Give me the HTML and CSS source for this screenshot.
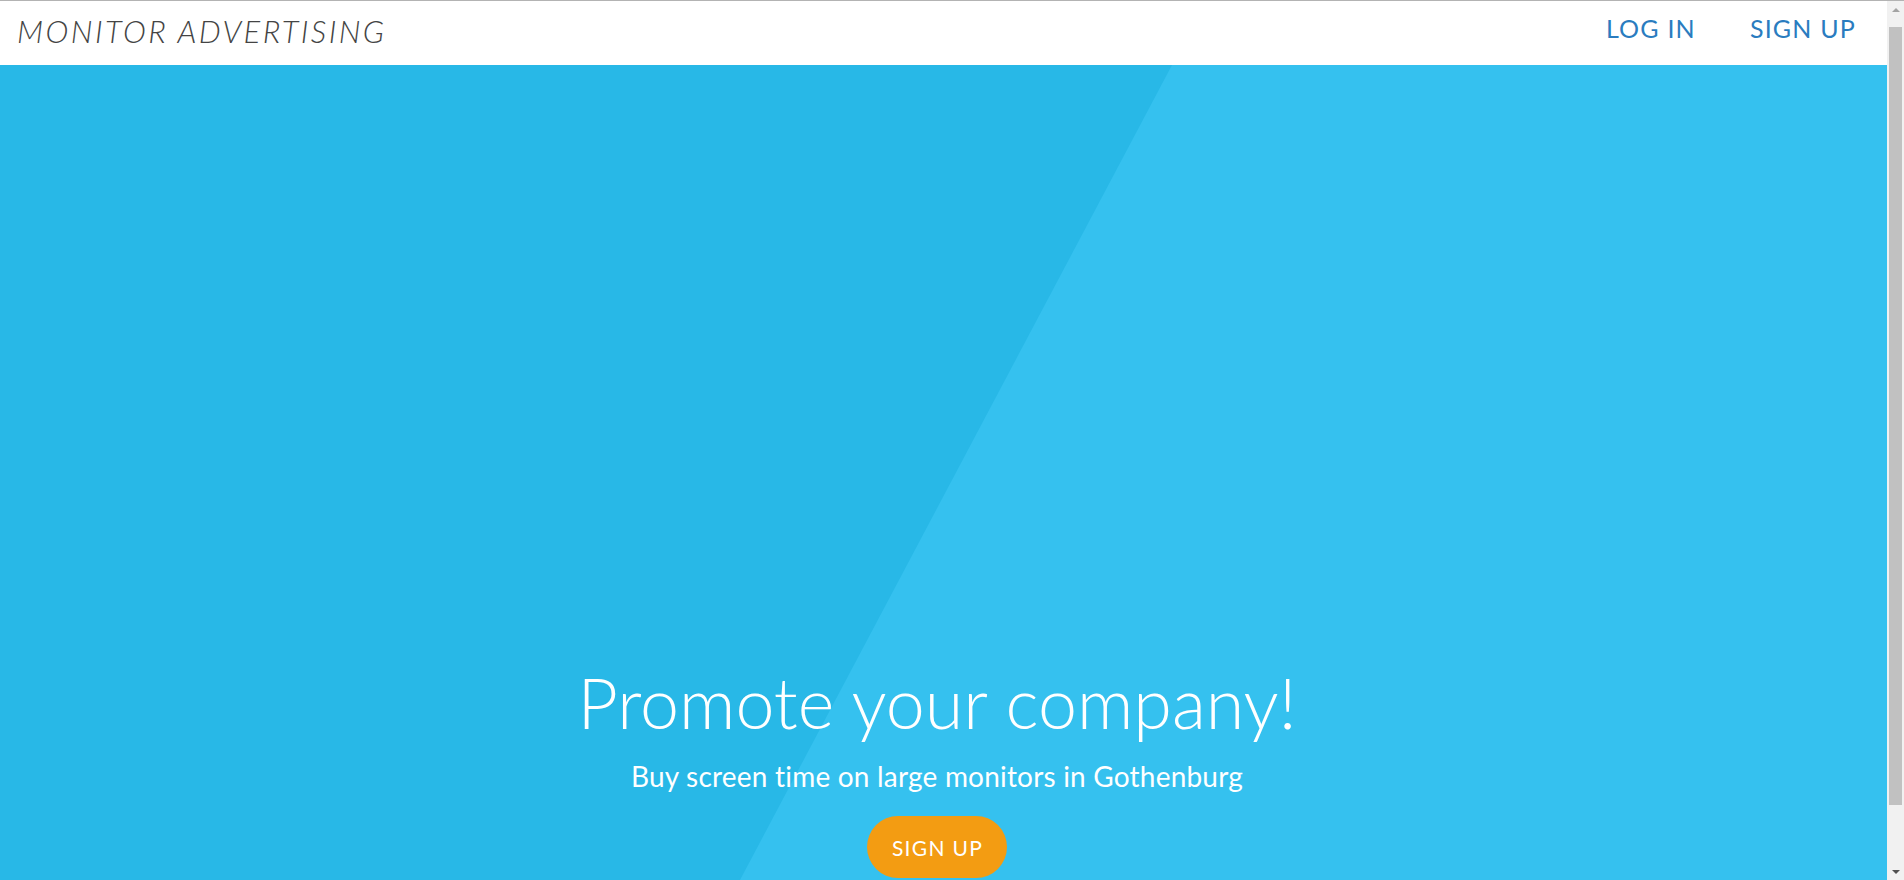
FILE: index.html
```html
<!DOCTYPE html>
<html lang="en">
<head>
<meta charset="utf-8">
<title>Monitor Advertising</title>
<link rel="stylesheet" href="styles.css">
</head>
<body>
<div class="frame">
  <div class="page">
    <header class="navbar">
      <a class="brand" href="#">MONITOR ADVERTISING</a>
      <nav class="nav-links">
        <a href="#">LOG IN</a>
        <a href="#">SIGN UP</a>
      </nav>
    </header>
    <section class="hero">
      <div class="hero-content">
        <h1 class="hero-title">Promote your company!</h1>
        <p class="hero-sub">Buy screen time on large monitors in Gothenburg</p>
        <a class="btn-signup" href="#">SIGN UP</a>
      </div>
    </section>
  </div>
  <div class="scrollbar">
    <div class="sb-arrow sb-up"></div>
    <div class="sb-track"><div class="sb-thumb"></div></div>
    <div class="sb-arrow sb-down"></div>
  </div>
</div>
</body>
</html>
```
FILE: styles.css
```css
* { box-sizing: border-box; }
html, body { margin: 0; padding: 0; height: 100%; overflow: hidden; }
body {
  border-top: 1px solid #b3b3b3;
  font-family: Lato, "Open Sans", "Liberation Sans", sans-serif;
  background: #fff;
}
.frame { display: flex; height: 879px; }
.page { flex: 1; display: flex; flex-direction: column; overflow: hidden; }

.navbar {
  height: 64px;
  flex: none;
  display: flex;
  align-items: center;
  justify-content: space-between;
  padding: 0 31px 0 17px;
  background: #fff;
}
.brand {
  font-style: italic;
  font-weight: 300;
  font-size: 31px;
  letter-spacing: 2.4px;
  color: #444;
  text-decoration: none;
  margin-top: -4px;
}
.nav-links { display: flex; gap: 54px; margin-top: -11px; }
.nav-links a {
  color: #2a7cbf;
  text-decoration: none;
  font-size: 25px;
  font-weight: 400;
  letter-spacing: 1.2px;
}

.hero {
  flex: 1;
  position: relative;
  background: #35c1ef;
  display: flex;
  flex-direction: column;
  align-items: center;
}
.hero::before {
  content: "";
  position: absolute;
  inset: 0;
  background: #28b8e7;
  clip-path: polygon(0 0, 1172px 0, 740px 815px, 0 815px);
}
.hero-content {
  position: relative;
  display: flex;
  flex-direction: column;
  align-items: center;
  padding-top: 602px;
  margin-right: 13px;
  color: #fff;
}
.hero-title {
  margin: 0;
  font-weight: 300;
  font-size: 70px;
  line-height: 1;
}
.hero-sub {
  margin: 25px 0 0;
  font-size: 28px;
  line-height: 1;
  font-weight: 400;
  letter-spacing: 0.2px;
}
.btn-signup {
  margin-top: 26px;
  width: 140px;
  height: 62px;
  border-radius: 31px;
  background: #f39c12;
  color: #fff;
  text-decoration: none;
  font-size: 21px;
  letter-spacing: 1.3px;
  padding-left: 1px;
  display: flex;
  align-items: center;
  justify-content: center;
}

.scrollbar {
  width: 17px;
  flex: none;
  background: #f1f1f1;
  display: flex;
  flex-direction: column;
}
.sb-arrow { height: 17px; flex: none; display: flex; align-items: center; justify-content: center; }
.sb-up::before {
  content: ""; border-left: 4px solid transparent; border-right: 4px solid transparent;
  border-bottom: 4px solid #a3a3a3;
}
.sb-down::before {
  content: ""; border-left: 4px solid transparent; border-right: 4px solid transparent;
  border-top: 4px solid #505050;
}
.sb-track { flex: 1; padding: 9px 2px 58px; display: flex; }
.sb-thumb { flex: 1; background: #c1c1c1; }
```
